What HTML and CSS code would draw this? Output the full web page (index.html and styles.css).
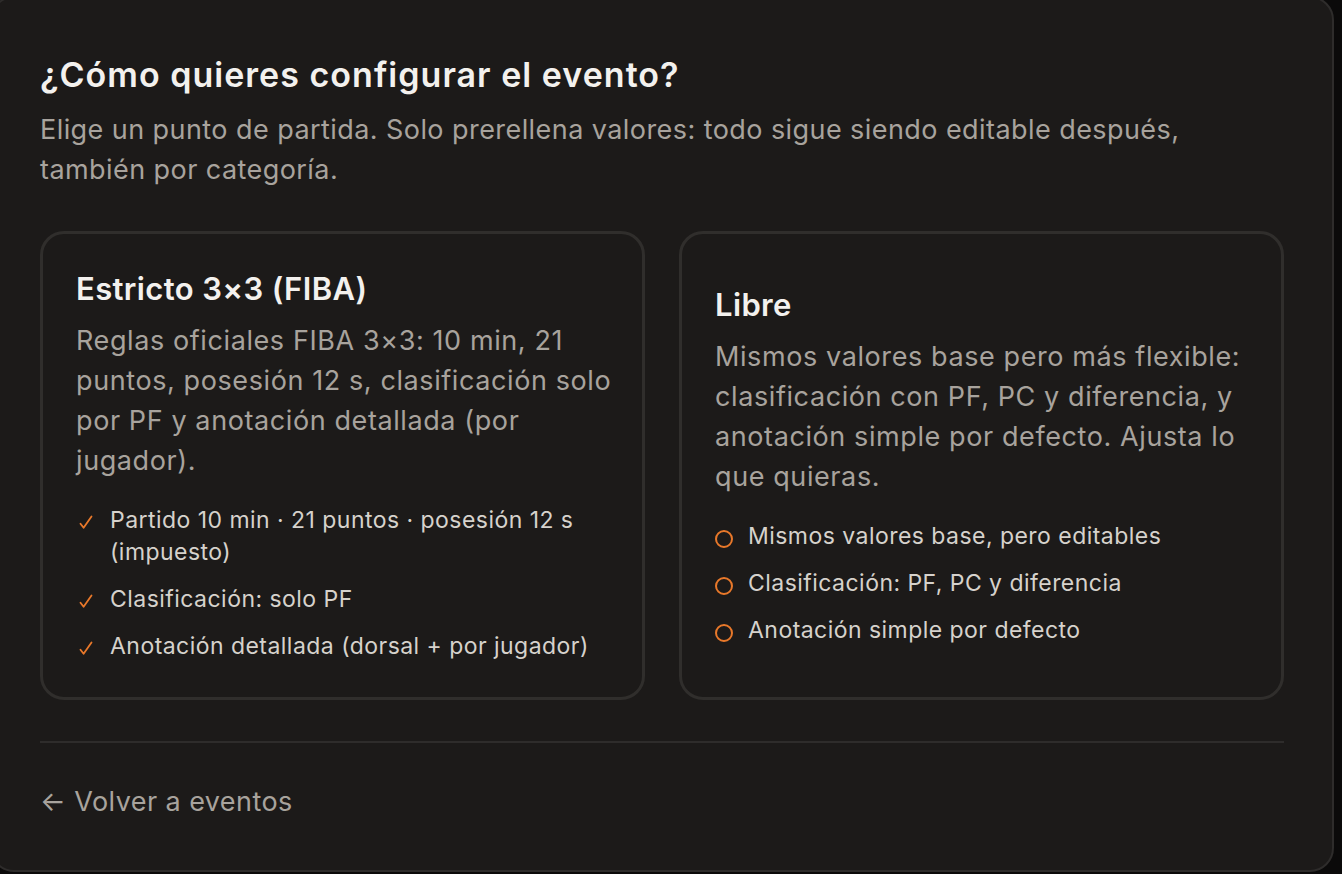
FILE: index.html
```html
<!DOCTYPE html>
<html lang="es">

<head>
    <meta charset="UTF-8" />
    <meta name="viewport" content="width=device-width, initial-scale=1" />
    <title>Configurar evento</title>
    <link rel="stylesheet" href="styles.css">
</head>

<body>
    <div class="panel">
        <h1 class="panel-title">¿Cómo quieres configurar el evento?</h1>
        <p class="panel-sub">Elige un punto de partida. Solo prerellena valores: todo sigue siendo editable después,
            también por categoría.</p>

        <div class="opciones">
            <div class="opcion">
                <h2 class="opcion-title">Estricto 3×3 (FIBA)</h2>
                <p class="opcion-text">Reglas oficiales FIBA 3×3: 10 min, 21 puntos, posesión 12 s, clasificación solo
                    por PF y anotación detallada (por jugador).</p>
                <ul class="lista">
                    <li><svg class="check" viewBox="0 0 14 16"><path d="M1.5 9.8 L4.6 13.8 L12.5 2.5" /></svg><span>Partido 10 min · 21 puntos · posesión 12 s (impuesto)</span></li>
                    <li><svg class="check" viewBox="0 0 14 16"><path d="M1.5 9.8 L4.6 13.8 L12.5 2.5" /></svg><span>Clasificación: solo PF</span></li>
                    <li><svg class="check" viewBox="0 0 14 16"><path d="M1.5 9.8 L4.6 13.8 L12.5 2.5" /></svg><span>Anotación detallada (dorsal + por jugador)</span></li>
                </ul>
            </div>

            <div class="opcion">
                <h2 class="opcion-title">Libre</h2>
                <p class="opcion-text">Mismos valores base pero más flexible: clasificación con PF, PC y diferencia, y
                    anotación simple por defecto. Ajusta lo que quieras.</p>
                <ul class="lista">
                    <li><span class="ring"></span><span>Mismos valores base, pero editables</span></li>
                    <li><span class="ring"></span><span>Clasificación: PF, PC y diferencia</span></li>
                    <li><span class="ring"></span><span>Anotación simple por defecto</span></li>
                </ul>
            </div>
        </div>

        <hr class="trenner" />

        <a href="#" class="volver">← Volver a eventos</a>
    </div>
</body>

</html>
```

FILE: styles.css
```css
html,
body {
    margin: 0;
    height: 100%;
}

body {
    background: #0b0a0a;
    font-family: Inter, "Noto Sans", sans-serif;
    color: #f3f1ee;
    overflow: hidden;
}

/* Hauptkarte, leicht nach oben/links verschoben wie im Original */
.panel {
    box-sizing: border-box;
    width: 1344px;
    height: 876px;
    margin: -4px 0 0 -10px;
    padding: 55px 48px 0 48px;
    background: #1c1a19;
    border: 2px solid #2e2c2b;
    border-radius: 24px;
}

.panel-title {
    margin: 0;
    font-size: 34px;
    line-height: 44px;
    font-weight: 600;
    letter-spacing: 0.03em;
}

.panel-sub {
    margin: 13px 0 0 0;
    font-size: 27px;
    line-height: 40px;
    letter-spacing: 0.016em;
    color: #a8a39d;
}

.opciones {
    display: grid;
    grid-template-columns: 1fr 1fr;
    gap: 34px;
    margin-top: 41px;
}

.opcion {
    display: flex;
    flex-direction: column;
    justify-content: center;
    box-sizing: border-box;
    padding: 35px 26px 35px 33px;
    border: 3px solid #302e2c;
    border-radius: 24px;
}

.opcion-title {
    margin: 0;
    font-size: 31px;
    line-height: 40px;
    font-weight: 600;
    letter-spacing: 0.012em;
}

.opcion-text {
    margin: 12px 0 0 0;
    font-size: 27px;
    line-height: 40px;
    letter-spacing: 0.022em;
    color: #a8a39d;
}

.lista {
    list-style: none;
    margin: 23px 0 0 0;
    padding: 0;
    display: flex;
    flex-direction: column;
    gap: 15px;
}

.lista li {
    display: flex;
    gap: 15px;
    font-size: 23px;
    line-height: 32px;
    letter-spacing: 0.02em;
    color: #d6d2cc;
}

.check {
    flex: none;
    width: 14px;
    height: 16px;
    margin: 10px 2px 0 3px;
}

.check path {
    fill: none;
    stroke: #e8782a;
    stroke-width: 1.8;
    stroke-linecap: round;
    stroke-linejoin: round;
}

.ring {
    flex: none;
    box-sizing: border-box;
    width: 18px;
    height: 18px;
    margin-top: 10px;
    border: 2px solid #e8782a;
    border-radius: 50%;
}

.trenner {
    margin: 41px 0 0 0;
    border: none;
    height: 2px;
    background: #2e2c2b;
}

.volver {
    display: inline-block;
    margin-top: 39px;
    font-size: 27px;
    line-height: 40px;
    letter-spacing: 0.016em;
    color: #a8a39d;
    text-decoration: none;
}
```
